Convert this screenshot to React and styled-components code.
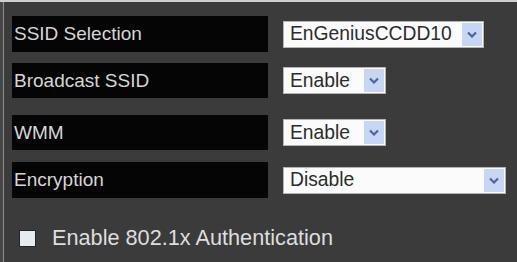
import React from "react";
import styled, { createGlobalStyle } from "styled-components";

const GlobalStyle = createGlobalStyle`
  html, body {
    margin: 0;
    padding: 0;
    background: #3b3b3b;
  }
  body {
    font-family: "Liberation Sans", Arial, sans-serif;
  }
`;

const Frame = styled.div`
  width: 517px;
  height: 262px;
  box-sizing: border-box;
  border-top: 2px solid #cfcfcf;
  padding-left: 3px;
  background: #474747;
  overflow: hidden;
`;

const Panel = styled.div`
  height: 100%;
  box-sizing: border-box;
  border-left: 1px solid #8c8c8c;
  background: #3b3b3b;
  padding: 14px 0 0 8px;
  display: flex;
  flex-direction: column;
`;

const Row = styled.div`
  display: flex;
  align-items: center;
  gap: 15px;
  margin-top: ${(p) => p.$gap || 0}px;
`;

const Label = styled.div`
  width: 256px;
  height: ${(p) => p.$h || 36}px;
  box-sizing: border-box;
  background: #050505;
  color: #d6d6d6;
  font-size: 19px;
  padding-left: 2px;
  display: flex;
  align-items: center;
`;

const SelectBox = styled.div`
  width: ${(p) => p.$w}px;
  height: 27px;
  box-sizing: border-box;
  background: #fbfbfb;
  border: 1px solid #b4b4b4;
  display: flex;
  align-items: center;
  justify-content: space-between;
  padding: 1px 1px 1px 6px;
  color: #2c2c2c;
  font-size: 19.3px;
`;

const Arrow = styled.div`
  width: 20px;
  height: 23px;
  background: #c7d6f2;
  display: flex;
  align-items: center;
  justify-content: center;
`;

const CheckRow = styled.div`
  display: flex;
  align-items: center;
  gap: 16px;
  margin-top: 27px;
  padding-left: 7px;
`;

const Box = styled.div`
  width: 17px;
  height: 17px;
  box-sizing: border-box;
  background: #e5ecef;
  border: 1px solid #1e2430;
`;

const CheckText = styled.span`
  color: #dedede;
  font-size: 21.7px;
`;

const Chevron = () => (
  <svg width="10" height="7" viewBox="0 0 10 7">
    <path d="M1 1.5 L5 5.5 L9 1.5" fill="none" stroke="#4a66a0" strokeWidth="2.2" />
  </svg>
);

const Select = ({ w, value }) => (
  <SelectBox $w={w}>
    <span>{value}</span>
    <Arrow>
      <Chevron />
    </Arrow>
  </SelectBox>
);

const rows = [
  { label: "SSID Selection", value: "EnGeniusCCDD10", w: 201, gap: 0 },
  { label: "Broadcast SSID", value: "Enable", w: 103, gap: 11, h: 35 },
  { label: "WMM", value: "Enable", w: 103, gap: 17, h: 35 },
  { label: "Encryption", value: "Disable", w: 223, gap: 12 },
];

export default function App() {
  return (
    <>
      <GlobalStyle />
      <Frame>
        <Panel>
          {rows.map((r) => (
            <Row key={r.label} $gap={r.gap}>
              <Label $h={r.h}>{r.label}</Label>
              <Select w={r.w} value={r.value} />
            </Row>
          ))}
          <CheckRow>
            <Box />
            <CheckText>Enable 802.1x Authentication</CheckText>
          </CheckRow>
        </Panel>
      </Frame>
    </>
  );
}
